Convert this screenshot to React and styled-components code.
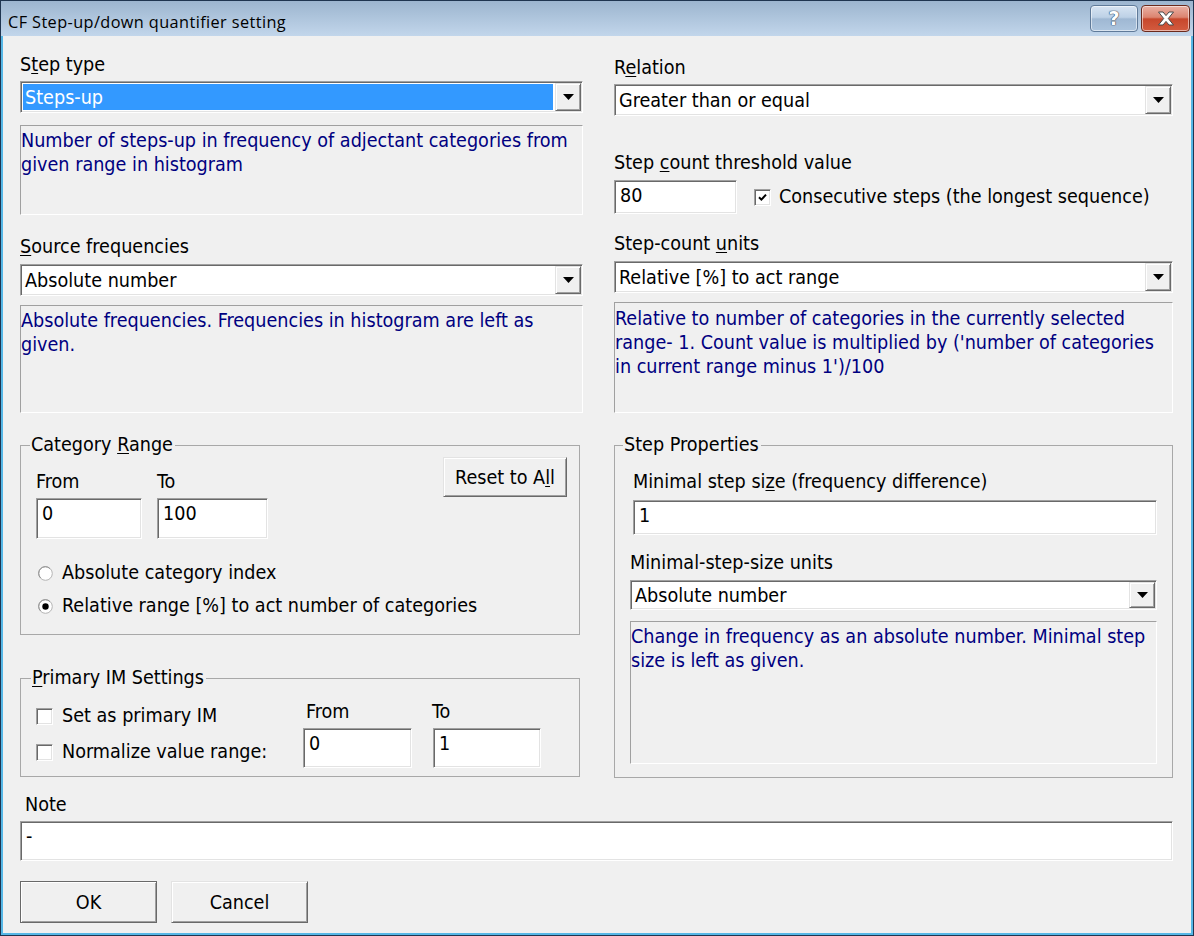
import React from 'react';
import styled, { createGlobalStyle } from 'styled-components';

const GlobalStyle = createGlobalStyle`
  html, body {
    margin: 0;
    padding: 0;
    background: #f0f0f0;
  }
  body {
    font-family: "DejaVu Sans Condensed", "DejaVu Sans", sans-serif;
    font-size: 19.6px;
    color: #000;
  }
  u {
    text-underline-offset: 2px;
  }
`;

// window frame
const Window = styled.div`
  width: 1194px;
  height: 936px;
  box-sizing: border-box;
  display: flex;
  flex-direction: column;
  border: 1px solid #1f3550;
  background: linear-gradient(#9cb5cf 0, #c2d6eb 35px, #56b7e6 35px);
  overflow: hidden;
`;

const TitleBar = styled.div`
  height: 35px;
  flex: none;
  display: flex;
  align-items: flex-start;
  padding: 0 3px 0 7px;
`;

const Title = styled.div`
  font-family: "Open Sans", "Noto Sans", sans-serif;
  font-size: 16.3px;
  letter-spacing: 0.4px;
  line-height: 20px;
  margin-top: 11px;
  color: #000;
  white-space: nowrap;
`;

const CaptionButtons = styled.div`
  margin-left: auto;
  margin-top: 4px;
  display: flex;
  gap: 3px;
`;

const CaptionButton = styled.div`
  width: ${p => p.$w}px;
  height: 27px;
  box-sizing: border-box;
  border-radius: 4px;
  border: 1px solid ${p => (p.$close ? '#6b2a1d' : '#5f7a99')};
  box-shadow: inset 0 0 0 1px rgba(255, 255, 255, 0.55);
  background: ${p =>
    p.$close
      ? 'linear-gradient(#eab1a5 0%, #dc8470 45%, #c7472c 52%, #d35c40 100%)'
      : 'linear-gradient(#d7e4f2 0%, #bdd1e6 45%, #9fb8d3 52%, #adc5de 100%)'};
  display: flex;
  align-items: center;
  justify-content: center;
`;

const HelpGlyph = styled.span`
  font-family: "DejaVu Sans", sans-serif;
  font-weight: bold;
  font-size: 19px;
  line-height: 1;
  color: #fff;
  text-shadow: 0 0 1px #34475e, 0 0 1px #34475e, 0 0 1px #34475e;
`;

const Client = styled.div`
  flex: 1;
  margin: 0 2px 2px;
  background: #f0f0f0;
  padding: 0 18px 0 17px;
  display: flex;
  flex-direction: column;
`;

const Columns = styled.div`
  display: grid;
  grid-template-columns: 563px 559px;
  column-gap: 31px;
`;

const Column = styled.div`
  display: flex;
  flex-direction: column;
  min-width: 0;
`;

const Label = styled.div`
  height: 22px;
  line-height: 24px;
  margin-top: ${p => p.$mt || 0}px;
  margin-left: ${p => p.$ml || 0}px;
  white-space: nowrap;
`;

const sunken = `
  box-sizing: border-box;
  border: 1px solid;
  border-color: #a0a0a0 #ffffff #ffffff #a0a0a0;
  box-shadow: inset 1px 1px #696969, inset -1px -1px #e3e3e3;
`;

const raised = `
  box-sizing: border-box;
  background: #f0f0f0;
  border: 1px solid;
  border-color: #e3e3e3 #696969 #696969 #e3e3e3;
  box-shadow: inset 1px 1px #ffffff, inset -1px -1px #a0a0a0;
`;

const ComboFrame = styled.div`
  ${sunken}
  height: ${p => p.$h}px;
  width: ${p => (p.$w ? `${p.$w}px` : '100%')};
  margin-top: ${p => p.$mt || 0}px;
  background: #fff;
  padding: 1px;
  display: flex;
`;

const ComboText = styled.div`
  flex: 1;
  margin: 1px 2px 1px 1px;
  padding: 1px 0 0 2px;
  display: flex;
  align-items: center;
  white-space: nowrap;
  background: ${p => (p.$selected ? '#3399ff' : 'transparent')};
  color: ${p => (p.$selected ? '#fff' : '#000')};
`;

const ComboButton = styled.div`
  ${raised}
  width: 26px;
  display: flex;
  align-items: center;
  justify-content: center;
`;

const Hint = styled.div`
  box-sizing: border-box;
  height: ${p => p.$h}px;
  width: ${p => (p.$w ? `${p.$w}px` : '100%')};
  margin-top: ${p => p.$mt || 0}px;
  border: 1px solid;
  border-color: #a0a0a0 #ffffff #ffffff #a0a0a0;
  padding-top: ${p => p.$pt || 3}px;
  color: #000080;
  line-height: 24px;
  white-space: nowrap;
`;

const TextBox = styled.div`
  ${sunken}
  background: #fff;
  width: ${p => (p.$w ? `${p.$w}px` : '100%')};
  height: ${p => p.$h}px;
  margin-top: ${p => p.$mt || 0}px;
  margin-left: ${p => p.$ml || 0}px;
  padding: 4px 0 0 5px;
  line-height: 22px;
  white-space: nowrap;
  flex: none;
`;

const Group = styled.fieldset`
  margin: ${p => p.$mt || 0}px 0 0;
  padding: 0 ${p => p.$pr || 0}px ${p => p.$pb}px ${p => p.$pl || 0}px;
  border: 1px solid #a8a8a8;
  width: ${p => (p.$w ? `${p.$w}px` : '100%')};
  box-sizing: border-box;
  min-width: 0;
  display: flex;
  flex-direction: column;
`;

const Legend = styled.legend`
  padding: 0 2px 0 1px;
  margin-left: ${p => p.$ml ?? -6}px;
  height: 22px;
  line-height: 22px;
`;

const RangeRow = styled.div`
  display: flex;
  align-items: flex-start;
  gap: 15px;
`;

const Field = styled.div`
  display: flex;
  flex-direction: column;
  margin-top: ${p => p.$mt}px;
`;

const PushButton = styled.div`
  ${raised}
  width: ${p => p.$w}px;
  height: ${p => p.$h}px;
  margin-top: ${p => p.$mt || 0}px;
  margin-left: ${p => (p.$right ? 'auto' : '0')};
  margin-right: ${p => p.$mr || 0}px;
  padding-top: 1px;
  display: flex;
  align-items: center;
  justify-content: center;
  white-space: nowrap;
  flex: none;
  ${p => p.$default && `
    border-color: #696969;
  `}
`;

const OptionList = styled.div`
  display: flex;
  flex-direction: column;
  gap: ${p => p.$gap}px;
  margin-top: ${p => p.$mt}px;
  padding-left: ${p => p.$pl || 0}px;
  width: ${p => (p.$w ? `${p.$w}px` : 'auto')};
  flex: none;
`;

const Option = styled.div`
  height: 22px;
  line-height: 24px;
  display: flex;
  align-items: center;
  gap: ${p => p.$gap || 9}px;
  margin-left: ${p => p.$ml || 0}px;
  white-space: nowrap;
`;

const CheckSquare = styled.span`
  ${sunken}
  width: 17px;
  height: 17px;
  background: #fff;
  display: flex;
  align-items: center;
  justify-content: center;
  flex: none;
`;

const ThresholdRow = styled.div`
  display: flex;
  align-items: center;
  margin-top: ${p => p.$mt}px;
`;

const PrimaryRow = styled.div`
  display: flex;
  align-items: flex-start;
`;

const FieldPair = styled.div`
  display: flex;
  gap: 21px;
`;

const ButtonRow = styled.div`
  display: flex;
  gap: 14px;
  margin-top: 20px;
`;

const Arrow = () => (
  <svg width="11" height="6" viewBox="0 0 11 6">
    <polygon points="0,0 11,0 5.5,6" fill="#000" />
  </svg>
);

const Combo = ({ children, selected, h = 32, w, mt }) => (
  <ComboFrame $h={h} $w={w} $mt={mt}>
    <ComboText $selected={selected}>{children}</ComboText>
    <ComboButton>
      <Arrow />
    </ComboButton>
  </ComboFrame>
);

const CheckBox = ({ checked, children, gap, ml }) => (
  <Option $gap={gap} $ml={ml}>
    <CheckSquare>
      {checked && (
        <svg width="9" height="9" viewBox="0 0 9 9">
          <path d="M1 4.2 L3.4 6.6 L8 1.6" fill="none" stroke="#000" strokeWidth="2" />
        </svg>
      )}
    </CheckSquare>
    <span>{children}</span>
  </Option>
);

const Radio = ({ checked, children }) => (
  <Option $gap={9}>
    <svg width="15" height="15" viewBox="0 0 15 15" style={{ flex: 'none' }}>
      <circle cx="7.5" cy="7.5" r="6.8" fill="#fff" stroke="#b4b4b4" strokeWidth="1" />
      <path d="M2.6 11.9 A6 6 0 0 1 11.9 2.6" fill="none" stroke="#8f8f8f" strokeWidth="1" />
      {checked && <circle cx="7.5" cy="7.5" r="3.2" fill="#000" />}
    </svg>
    <span>{children}</span>
  </Option>
);

const CloseIcon = () => (
  <svg width="20" height="15" viewBox="0 0 20 15">
    <polygon
      points="2.5,1 7,1 10,4.6 13,1 17.5,1 12.3,7.5 17.5,14 13,14 10,10.4 7,14 2.5,14 7.7,7.5"
      fill="#fff"
      stroke="#474747"
      strokeWidth="1"
      strokeLinejoin="round"
    />
  </svg>
);

export default function App() {
  return (
    <>
      <GlobalStyle />
      <Window>
        <TitleBar>
          <Title>CF Step-up/down quantifier setting</Title>
          <CaptionButtons>
            <CaptionButton $w={48}>
              <HelpGlyph>?</HelpGlyph>
            </CaptionButton>
            <CaptionButton $w={49} $close>
              <CloseIcon />
            </CaptionButton>
          </CaptionButtons>
        </TitleBar>

        <Client>
          <Columns>
            <Column>
              <Label $mt={17}>S<u>t</u>ep type</Label>
              <Combo mt={6} selected>Steps-up</Combo>
              <Hint $mt={12} $h={90}>
                Number of steps-up in frequency of adjectant categories from
                <br />
                given range in histogram
              </Hint>

              <Label $mt={20}><u>S</u>ource frequencies</Label>
              <Combo mt={7}>Absolute number</Combo>
              <Hint $mt={9} $h={108}>
                Absolute frequencies. Frequencies in histogram are left as
                <br />
                given.
              </Hint>

              <Group $mt={21} $w={560} $pl={15} $pb={17}>
                <Legend>Category <u>R</u>ange</Legend>
                <RangeRow>
                  <Field $mt={14}>
                    <Label>From</Label>
                    <TextBox $mt={6} $w={106} $h={41}>0</TextBox>
                  </Field>
                  <Field $mt={14}>
                    <Label>To</Label>
                    <TextBox $mt={6} $w={111} $h={41}>100</TextBox>
                  </Field>
                  <PushButton $w={124} $h={40} $mt={1} $mr={12} $right>
                    Reset to A<u>l</u>l
                  </PushButton>
                </RangeRow>
                <OptionList $gap={11} $mt={23} $pl={2}>
                  <Radio>Absolute category index</Radio>
                  <Radio checked>Relative range [%] to act number of categories</Radio>
                </OptionList>
              </Group>

              <Group $mt={32} $w={560} $pl={15} $pb={8}>
                <Legend $ml={-5}><u>P</u>rimary IM Settings</Legend>
                <PrimaryRow>
                  <OptionList $gap={14} $mt={16} $w={267}>
                    <CheckBox>Set as primary IM</CheckBox>
                    <CheckBox>Normalize value range:</CheckBox>
                  </OptionList>
                  <FieldPair>
                    <Field $mt={11}>
                      <Label $ml={3}>From</Label>
                      <TextBox $mt={6} $w={109} $h={40}>0</TextBox>
                    </Field>
                    <Field $mt={11}>
                      <Label $ml={-1}>To</Label>
                      <TextBox $mt={6} $w={108} $h={40}>1</TextBox>
                    </Field>
                  </FieldPair>
                </PrimaryRow>
              </Group>
            </Column>

            <Column>
              <Label $mt={20}>R<u>e</u>lation</Label>
              <Combo mt={6}>Greater than or equal</Combo>

              <Label $mt={35}>Step <u>c</u>ount threshold value</Label>
              <ThresholdRow $mt={7}>
                <TextBox $w={123} $h={34}>80</TextBox>
                <CheckBox checked gap={8} ml={17}>
                  Consecutive steps (the longest sequence)
                </CheckBox>
              </ThresholdRow>

              <Label $mt={18}>Step-count <u>u</u>nits</Label>
              <Combo mt={7}>Relative [%] to act range</Combo>
              <Hint $mt={9} $h={111} $pt={4}>
                Relative to number of categories in the currently selected
                <br />
                range- 1. Count value is multiplied by ('number of categories
                <br />
                in current range minus 1')/100
              </Hint>

              <Group $mt={21} $pl={15} $pb={13}>
                <Legend $ml={-7}>Step Properties</Legend>
                <Label $mt={14} $ml={3}>Minimal step si<u>z</u>e (frequency difference)</Label>
                <TextBox $mt={8} $ml={3} $w={524} $h={35}>1</TextBox>
                <Label $mt={16}>Minimal-step-size units</Label>
                <Combo mt={7} h={30} w={527}>Absolute number</Combo>
                <Hint $mt={11} $h={143} $w={527}>
                  Change in frequency as an absolute number. Minimal step
                  <br />
                  size is left as given.
                </Hint>
              </Group>
            </Column>
          </Columns>

          <Label $mt={15} $ml={5}>Note</Label>
          <TextBox $mt={6} $h={40}>-</TextBox>

          <ButtonRow>
            <PushButton $w={137} $h={42} $default>OK</PushButton>
            <PushButton $w={137} $h={42}>Cancel</PushButton>
          </ButtonRow>
        </Client>
      </Window>
    </>
  );
}
